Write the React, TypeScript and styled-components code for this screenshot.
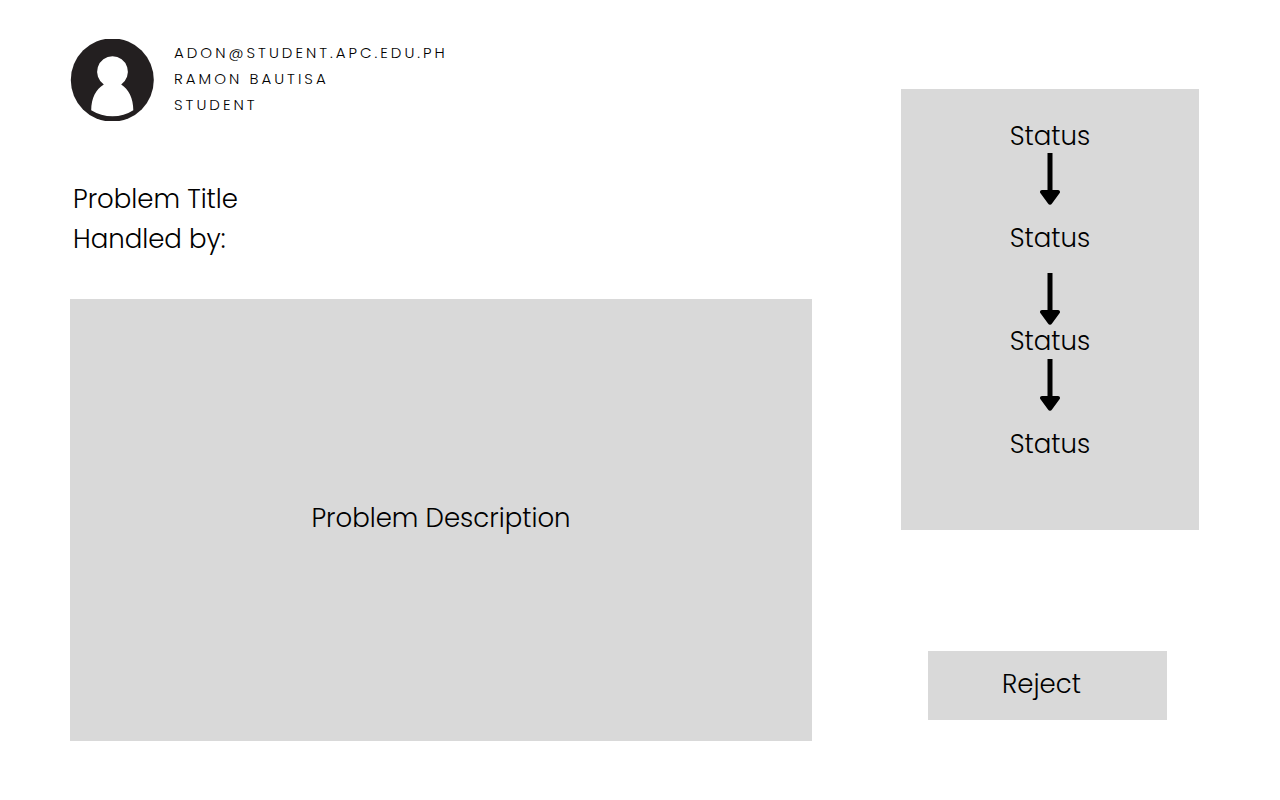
import React, { Fragment } from "react";
import styled, { createGlobalStyle } from "styled-components";

const GlobalStyle = createGlobalStyle`
  *, *::before, *::after { box-sizing: border-box; }
  body {
    margin: 0;
    background: #ffffff;
    color: #000000;
    font-family: Poppins, Inter, "Liberation Sans", sans-serif;
    font-weight: 300;
  }
`;

const Page = styled.div`
  display: grid;
  grid-template-columns: minmax(0, 1fr) 298px;
  column-gap: 89px;
  padding: 39px 81px 59px 70px;
`;

const Main = styled.main`
  display: flex;
  flex-direction: column;
`;

const Profile = styled.header`
  display: flex;
  align-items: center;
  gap: 20px;
`;

const Avatar = styled.svg`
  flex: none;
  width: 84px;
  height: 82px;
`;

const ProfileLines = styled.div`
  padding-bottom: 2px;
  font-size: 15px;
  line-height: 26px;
  letter-spacing: 3px;
  text-transform: uppercase;
`;

const ProfileLine = styled.p`
  margin: 0;
`;

const Heading = styled.div`
  padding: 58px 3px 40px;
`;

const Title = styled.h1`
  margin: 0;
  font-size: 26px;
  font-weight: inherit;
  line-height: 40px;
`;

const Handler = styled.p`
  margin: 0;
  font-size: 26px;
  line-height: 40px;
`;

const Description = styled.section`
  display: flex;
  align-items: center;
  justify-content: center;
  min-height: 442px;
  padding-bottom: 4px;
  background: #d9d9d9;
  font-size: 26px;
  line-height: 40px;
`;

const Side = styled.aside`
  display: flex;
  flex-direction: column;
  padding-top: 50px;
`;

const StatusPanel = styled.ol`
  display: flex;
  flex-direction: column;
  align-items: center;
  margin: 0;
  min-height: 441px;
  padding: 34px 0;
  background: #d9d9d9;
  list-style: none;
`;

const Status = styled.li`
  font-size: 26px;
  line-height: 26px;
`;

const ArrowStep = styled.li<{ $before: number; $after: number }>`
  display: flex;
  padding: ${(p) => p.$before}px 0 ${(p) => p.$after}px;
`;

const RejectButton = styled.button`
  margin: 121px 32px 0 27px;
  min-height: 69px;
  padding: 0 12px 4px 0;
  border: 0;
  background: #d9d9d9;
  color: inherit;
  font: inherit;
  font-size: 26px;
  line-height: 40px;
  cursor: pointer;
`;

const steps = [
  { label: "Status", before: 4, after: 20 },
  { label: "Status", before: 22, after: 3 },
  { label: "Status", before: 5, after: 20 },
  { label: "Status" },
];

function DownArrow() {
  return (
    <svg width="20" height="52" viewBox="0 0 20 52" aria-hidden="true">
      <path
        d="M7.500 0h5v37H18c1.800 0 2.600 2 1.500 3.300L12 50.600c-1 1.600-3 1.600-4 0L.5 40.300C-.6 39 .2 37 2 37h5.500z"
        fill="#000000"
      />
    </svg>
  );
}

export default function App() {
  return (
    <>
      <GlobalStyle />
      <Page>
        <Main>
          <Profile>
            <Avatar viewBox="0 0 84 82" role="img" aria-label="User">
              <ellipse cx="42.300" cy="41" rx="41.500" ry="41.600" fill="#231f20" />
              <path
                d="M42.500 17.300a15.400 15.400 0 0 1 8.700 28.100C58.500 50 63.300 59 63.300 71.200Q54 77.300 42.500 77.300T21.200 71.200C21.200 59 26 50 33.800 45.400A15.400 15.400 0 0 1 42.500 17.300z"
                fill="#ffffff"
              />
            </Avatar>
            <ProfileLines>
              <ProfileLine>adon@student.apc.edu.ph</ProfileLine>
              <ProfileLine>Ramon Bautisa</ProfileLine>
              <ProfileLine>Student</ProfileLine>
            </ProfileLines>
          </Profile>
          <Heading>
            <Title>Problem Title</Title>
            <Handler>Handled by:</Handler>
          </Heading>
          <Description>Problem Description</Description>
        </Main>
        <Side>
          <StatusPanel>
            {steps.map((step, i) => (
              <Fragment key={i}>
                <Status>{step.label}</Status>
                {step.before !== undefined && (
                  <ArrowStep $before={step.before} $after={step.after} aria-hidden="true">
                    <DownArrow />
                  </ArrowStep>
                )}
              </Fragment>
            ))}
          </StatusPanel>
          <RejectButton type="button">Reject</RejectButton>
        </Side>
      </Page>
    </>
  );
}
